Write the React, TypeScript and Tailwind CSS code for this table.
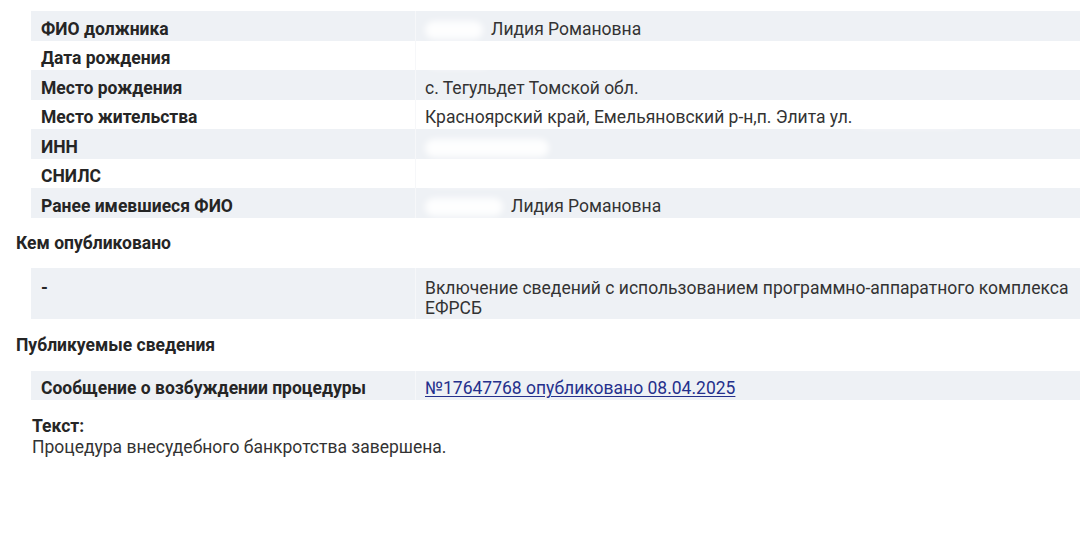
const font = { fontFamily: "Roboto, 'Noto Sans', sans-serif" };

type Row = { label: string; value: React.ReactNode; h?: string; top?: boolean };

function Blur({ w }: { w: string }) {
  return <span className={`inline-block h-[18px] ${w} rounded-full bg-white/90 blur-[3px] align-middle`} />;
}

const debtor: Row[] = [
  { label: "ФИО должника", value: <><Blur w="w-[58px]" /><span className="ml-[8px]">Лидия Романовна</span></> },
  { label: "Дата рождения", value: <Blur w="w-[66px]" /> },
  { label: "Место рождения", value: "с. Тегульдет Томской обл." },
  { label: "Место жительства", value: <>Красноярский край, Емельяновский р-н,п. Элита ул.<Blur w="w-[110px] ml-1" /></> },
  { label: "ИНН", value: <Blur w="w-[124px]" /> },
  { label: "СНИЛС", value: <Blur w="w-[128px]" /> },
  { label: "Ранее имевшиеся ФИО", value: <><Blur w="w-[78px]" /><span className="ml-[8px]">Лидия Романовна</span></> },
];

function Table({ rows, gray }: { rows: Row[]; gray?: boolean }) {
  return (
    <div className="ml-[31px]">
      {rows.map((r, i) => (
        <div
          key={i}
          className={`flex ${r.h ?? "h-[29.5px]"} ${gray || i % 2 === 0 ? "bg-[#eef1f5]" : "bg-white"}`}
        >
          <div
            className={`w-[384px] shrink-0 flex ${r.top ? "items-start pt-[10px]" : "items-center pt-[6px]"} pl-[10px] text-[17.5px] leading-[20px] font-bold text-[#252525]`}
          >
            {r.label}
          </div>
          <div
            className={`flex-1 flex ${r.top ? "items-start pt-[10px]" : "items-center pt-[6px]"} pl-[9px] border-l border-[#f6f7f9] text-[17.5px] text-[#333] leading-[20px]`}
          >
            <div>{r.value}</div>
          </div>
        </div>
      ))}
    </div>
  );
}

export default function App() {
  return (
    <div className="w-[1080px] h-[540px] bg-white overflow-hidden pt-[11px]" style={font}>
      <Table rows={debtor} />

      <div className="pl-[16px] mt-[12px] h-[22px] text-[17.5px] font-bold text-[#252525]">Кем опубликовано</div>
      <div className="mt-[16px]">
        <Table
          gray
          rows={[
            {
              label: "-",
              h: "h-[51px]",
              top: true,
              value: (
                <>
                  Включение сведений с использованием программно-аппаратного комплекса
                  <br />
                  ЕФРСБ
                </>
              ),
            },
          ]}
        />
      </div>

      <div className="pl-[16px] mt-[13px] h-[22px] text-[17.5px] font-bold text-[#252525]">Публикуемые сведения</div>
      <div className="mt-[17px]">
        <Table
          gray
          rows={[
            {
              label: "Сообщение о возбуждении процедуры",
              h: "h-[29.5px]",
              value: (
                <a href="#" className="text-[#25308c] underline underline-offset-2">
                  №17647768 опубликовано 08.04.2025
                </a>
              ),
            },
          ]}
        />
      </div>

      <div className="pl-[32px] mt-[16px] text-[17.5px] leading-[21px] text-[#262626]">
        <div className="font-bold">Текст:</div>
        <div className="text-[#333]">Процедура внесудебного банкротства завершена.</div>
      </div>
    </div>
  );
}
